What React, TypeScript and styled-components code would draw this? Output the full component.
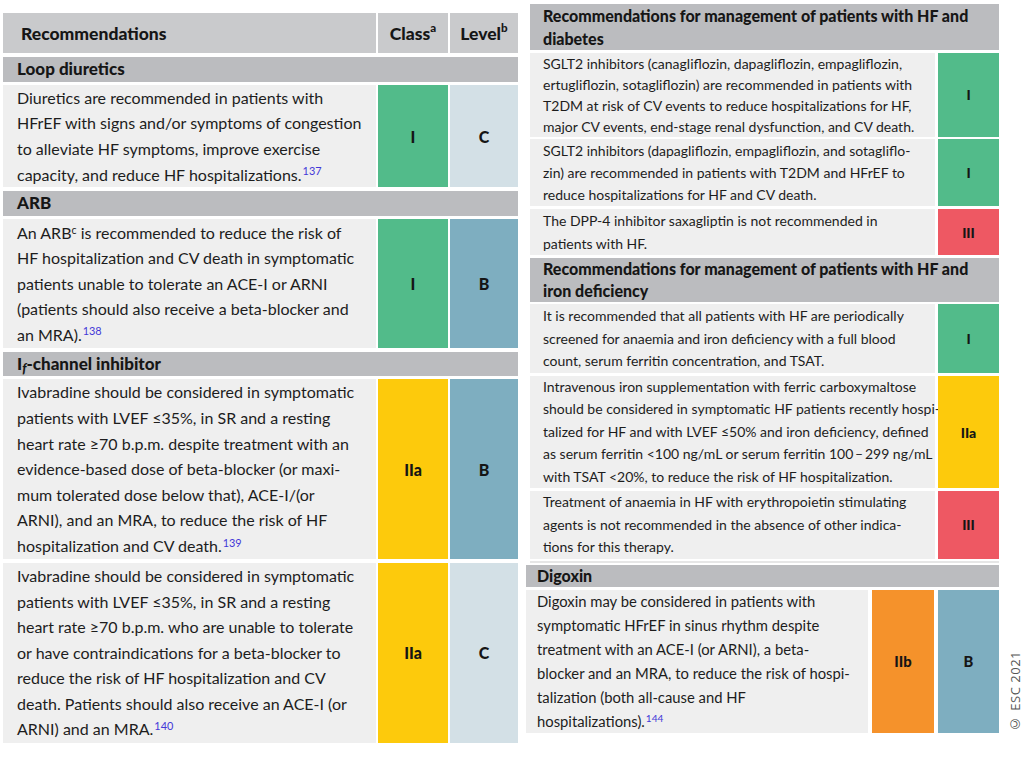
import React from 'react';
import styled, { createGlobalStyle } from 'styled-components';

const GlobalStyle = createGlobalStyle`
  html, body { margin: 0; padding: 0; background: #ffffff; }
  body { font-family: Lato, "Open Sans", "DejaVu Sans", sans-serif; color: #1d1d1d; }
`;

const tones: Record<string, string> = {
  green: '#52bb8a',
  yellow: '#fdca0c',
  red: '#ee5863',
  orange: '#f5922b',
  blueDark: '#7eaec0',
  blueLight: '#d3e0e6',
};

const Page = styled.div`
  width: 1024px;
  height: 768px;
  display: flex;
  align-items: flex-start;
  overflow: hidden;
`;

const Table = styled.div<{ $cols: string; $rows: string; $rowGap: number; $colGap: number; $size: number }>`
  display: grid;
  grid-template-columns: ${p => p.$cols};
  grid-template-rows: ${p => p.$rows};
  column-gap: ${p => p.$colGap}px;
  row-gap: ${p => p.$rowGap}px;
  font-size: ${p => p.$size}px;
`;

const LeftTable = styled(Table)`
  margin: 13px 0 0 3px;
  width: 515px;
`;

const RightCol = styled.div`
  margin: 4px 0 0 8px;
  width: 498px;
  display: flex;
  flex-direction: column;
`;

const RightTable = styled(Table)`
  margin-left: 4px;
  width: 469px;
`;

const Rule = styled.div`
  margin: 2px 0 0 4px;
  width: 469px;
  height: 2px;
  background: #e6e6e6;
`;

const DigoxinRow = styled.div`
  margin-top: 2px;
  display: flex;
  align-items: flex-end;
  gap: 7px;
`;

const DigoxinTable = styled(Table)`
  width: 473px;
`;

const HeadCell = styled.div<{ $center?: boolean }>`
  background: #c9cacc;
  display: flex;
  align-items: center;
  justify-content: ${p => (p.$center ? 'center' : 'flex-start')};
  padding: ${p => (p.$center ? '0' : '0 0 0 18px')};
  font-weight: 900;
  font-size: 17.5px;
  color: #161616;
`;

const SectionCell = styled.div<{ $pad: number; $lh?: number; $size: number }>`
  grid-column: 1 / -1;
  background: #bbbcbf;
  display: flex;
  align-items: center;
  padding-left: ${p => p.$pad}px;
  font-weight: 900;
  font-size: ${p => p.$size}px;
  line-height: ${p => p.$lh ?? 22}px;
  white-space: pre;
  color: #161616;
`;

const TextCell = styled.div<{ $pad: number }>`
  background: #efefef;
  display: flex;
  align-items: center;
  padding-left: ${p => p.$pad}px;
`;

const Para = styled.p<{ $lh: number }>`
  margin: 0;
  white-space: pre;
  line-height: ${p => p.$lh}px;
`;

const Grade = styled.div<{ $tone: string }>`
  background: ${p => tones[p.$tone]};
  display: flex;
  align-items: center;
  justify-content: center;
  font-weight: 900;
  color: #151515;
`;

const Ref = styled.span`
  position: relative;
  top: -0.5em;
  font-size: 0.68em;
  line-height: 0;
  color: #4338d8;
  margin-left: 1px;
`;

const Note = styled.span`
  position: relative;
  top: -0.45em;
  font-size: 0.66em;
  line-height: 0;
`;

const Sub = styled.span`
  position: relative;
  top: 0.3em;
  font-size: 0.75em;
  line-height: 0;
  font-style: italic;
`;

const Copyright = styled.div`
  writing-mode: vertical-rl;
  transform: rotate(180deg);
  font-family: "Open Sans", Lato, sans-serif;
  font-size: 13px;
  color: #555;
  letter-spacing: 0.5px;
`;

export default function App() {
  return (
    <>
      <GlobalStyle />
      <Page>
        <LeftTable
          $cols="373px 70px 68px"
          $rows="40px 25px 102px 25px 129px 24px 180px 180px"
          $rowGap={3.5}
          $colGap={2}
          $size={16}
        >
          <HeadCell>Recommendations</HeadCell>
          <HeadCell $center>
            Class<Note>a</Note>
          </HeadCell>
          <HeadCell $center>
            Level<Note>b</Note>
          </HeadCell>

          <SectionCell $pad={14} $size={17}>Loop diuretics</SectionCell>
          <TextCell $pad={14}>
            <Para $lh={25.6}>
              {'Diuretics are recommended in patients with\nHFrEF with signs and/or symptoms of congestion\nto alleviate HF symptoms, improve exercise\ncapacity, and reduce HF hospitalizations.'}
              <Ref>137</Ref>
            </Para>
          </TextCell>
          <Grade $tone="green">I</Grade>
          <Grade $tone="blueLight">C</Grade>

          <SectionCell $pad={14} $size={17}>ARB</SectionCell>
          <TextCell $pad={14}>
            <Para $lh={25.6}>
              An ARB<Note>c</Note>
              {' is recommended to reduce the risk of\nHF hospitalization and CV death in symptomatic\npatients unable to tolerate an ACE-I or ARNI\n(patients should also receive a beta-blocker and\nan MRA).'}
              <Ref>138</Ref>
            </Para>
          </TextCell>
          <Grade $tone="green">I</Grade>
          <Grade $tone="blueDark">B</Grade>

          <SectionCell $pad={14} $size={17}>
            <span>
              I<Sub>f</Sub>-channel inhibitor
            </span>
          </SectionCell>
          <TextCell $pad={14}>
            <Para $lh={25.6}>
              {'Ivabradine should be considered in symptomatic\npatients with LVEF \u226435%, in SR and a resting\nheart rate \u226570 b.p.m. despite treatment with an\nevidence-based dose of beta-blocker (or maxi-\nmum tolerated dose below that), ACE-I/(or\nARNI), and an MRA, to reduce the risk of HF\nhospitalization and CV death.'}
              <Ref>139</Ref>
            </Para>
          </TextCell>
          <Grade $tone="yellow">IIa</Grade>
          <Grade $tone="blueDark">B</Grade>

          <TextCell $pad={14}>
            <Para $lh={25.6}>
              {'Ivabradine should be considered in symptomatic\npatients with LVEF \u226435%, in SR and a resting\nheart rate \u226570 b.p.m. who are unable to tolerate\nor have contraindications for a beta-blocker to\nreduce the risk of HF hospitalization and CV\ndeath. Patients should also receive an ACE-I (or\nARNI) and an MRA.'}
              <Ref>140</Ref>
            </Para>
          </TextCell>
          <Grade $tone="yellow">IIa</Grade>
          <Grade $tone="blueLight">C</Grade>
        </LeftTable>

        <RightCol>
          <RightTable
            $cols="405px 61px"
            $rows="46px 84px 67px 46px 44px 69px 112px 68px"
            $rowGap={2.7}
            $colGap={3}
            $size={14}
          >
            <SectionCell $pad={13} $lh={23} $size={16}>
              {'Recommendations for management of patients with HF and\ndiabetes'}
            </SectionCell>
            <TextCell $pad={13}>
              <Para $lh={21}>
                {'SGLT2 inhibitors (canagliflozin, dapagliflozin, empagliflozin,\nertugliflozin, sotagliflozin) are recommended in patients with\nT2DM at risk of CV events to reduce hospitalizations for HF,\nmajor CV events, end-stage renal dysfunction, and CV death.'}
              </Para>
            </TextCell>
            <Grade $tone="green">I</Grade>

            <TextCell $pad={13}>
              <Para $lh={22}>
                {'SGLT2 inhibitors (dapagliflozin, empagliflozin, and sotagliflo-\nzin) are recommended in patients with T2DM and HFrEF to\nreduce hospitalizations for HF and CV death.'}
              </Para>
            </TextCell>
            <Grade $tone="green">I</Grade>

            <TextCell $pad={13}>
              <Para $lh={23}>
                {'The DPP-4 inhibitor saxagliptin is not recommended in\npatients with HF.'}
              </Para>
            </TextCell>
            <Grade $tone="red">III</Grade>

            <SectionCell $pad={13} $lh={22} $size={16}>
              {'Recommendations for management of patients with HF and\niron deficiency'}
            </SectionCell>
            <TextCell $pad={13}>
              <Para $lh={22.5}>
                {'It is recommended that all patients with HF are periodically\nscreened for anaemia and iron deficiency with a full blood\ncount, serum ferritin concentration, and TSAT.'}
              </Para>
            </TextCell>
            <Grade $tone="green">I</Grade>

            <TextCell $pad={13}>
              <Para $lh={22.5}>
                {'Intravenous iron supplementation with ferric carboxymaltose\nshould be considered in symptomatic HF patients recently hospi-\ntalized for HF and with LVEF \u226450% and iron deficiency, defined\nas serum ferritin <100 ng/mL or serum ferritin 100\u2009\u2013\u2009299 ng/mL\nwith TSAT <20%, to reduce the risk of HF hospitalization.'}
              </Para>
            </TextCell>
            <Grade $tone="yellow">IIa</Grade>

            <TextCell $pad={13}>
              <Para $lh={22.5}>
                {'Treatment of anaemia in HF with erythropoietin stimulating\nagents is not recommended in the absence of other indica-\ntions for this therapy.'}
              </Para>
            </TextCell>
            <Grade $tone="red">III</Grade>
          </RightTable>

          <Rule />

          <DigoxinRow>
            <DigoxinTable
              $cols="342px 62px 61px"
              $rows="22px 143px"
              $rowGap={3}
              $colGap={4}
              $size={14.8}
            >
              <SectionCell $pad={11} $size={16}>Digoxin</SectionCell>
              <TextCell $pad={11}>
                <Para $lh={24}>
                  {'Digoxin may be considered in patients with\nsymptomatic HFrEF in sinus rhythm despite\ntreatment with an ACE-I (or ARNI), a beta-\nblocker and an MRA, to reduce the risk of hospi-\ntalization (both all-cause and HF\nhospitalizations).'}
                  <Ref>144</Ref>
                </Para>
              </TextCell>
              <Grade $tone="orange">IIb</Grade>
              <Grade $tone="blueDark">B</Grade>
            </DigoxinTable>
            <Copyright>{'\u00a9 ESC 2021'}</Copyright>
          </DigoxinRow>
        </RightCol>
      </Page>
    </>
  );
}
